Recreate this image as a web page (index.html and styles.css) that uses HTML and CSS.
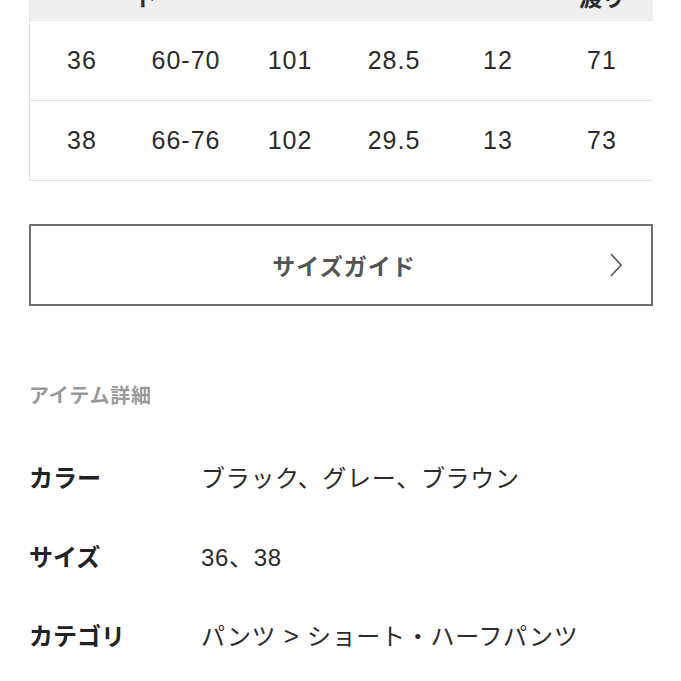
FILE: index.html
```html
<!DOCTYPE html>
<html lang="ja">
<head>
<meta charset="utf-8">
<link rel="stylesheet" href="styles.css">
</head>
<body>
<div class="page">
  <div class="table-wrap">
    <div class="size-table">
      <div class="row head">
        <div class="cell"></div>
        <div class="cell"><span class="tick">ト</span></div>
        <div class="cell"></div>
        <div class="cell"></div>
        <div class="cell"></div>
        <div class="cell">渡り</div>
      </div>
      <div class="row">
        <div class="cell">36</div><div class="cell">60-70</div><div class="cell">101</div><div class="cell">28.5</div><div class="cell">12</div><div class="cell">71</div>
      </div>
      <div class="row">
        <div class="cell">38</div><div class="cell">66-76</div><div class="cell">102</div><div class="cell">29.5</div><div class="cell">13</div><div class="cell">73</div>
      </div>
    </div>
  </div>

  <a class="guide-btn">
    <span class="guide-label">サイズガイド</span>
    <svg class="chev" width="14" height="24" viewBox="0 0 14 24"><path d="M2 1 L12 12 L2 23" fill="none" stroke="#555" stroke-width="1.6"/></svg>
  </a>

  <h2 class="section-title">アイテム詳細</h2>

  <dl class="details">
    <div class="detail"><dt>カラー</dt><dd>ブラック、グレー、ブラウン</dd></div>
    <div class="detail"><dt>サイズ</dt><dd>36、38</dd></div>
    <div class="detail"><dt>カテゴリ</dt><dd>パンツ <span class="gt">&gt;</span> ショート・ハーフパンツ</dd></div>
  </dl>
</div>
</body>
</html>
```

FILE: styles.css
```css
html, body {
  margin: 0;
  padding: 0;
  background: #fff;
}
* {
  box-sizing: border-box;
}
body {
  font-family: "Liberation Sans", "Noto Sans CJK JP", sans-serif;
  color: #2b2b2b;
}
.page {
  padding: 0 28px 0 29px;
}
.table-wrap {
  width: 624px;
  overflow: hidden;
  margin-top: -39px;
  border-left: 1px solid #e4e4e4;
}
.size-table {
  width: 728px;
}
.row {
  display: grid;
  grid-template-columns: repeat(6, 104px);
  height: 80px;
  border-bottom: 1px solid #e4e4e4;
  align-items: center;
}
.row.head {
  height: 60px;
  background: #efefef;
  border-bottom: 1px solid #e8e8e8;
  align-items: end;
  width: 624px;
}
.head .cell {
  font-family: "Noto Sans CJK JP", sans-serif;
  font-weight: 700;
  font-size: 23px;
  line-height: 1;
  padding-bottom: 12px;
  letter-spacing: 0;
}
.cell {
  text-align: center;
  font-size: 25px;
  letter-spacing: 1px;
  color: #2b2b2b;
}
.tick {
  display: inline-block;
  margin-right: 90px;
}
.guide-btn {
  display: flex;
  align-items: center;
  justify-content: center;
  position: relative;
  margin-top: 43px;
  width: 624px;
  height: 82px;
  border: 2px solid #6e6e6e;
}
.guide-label {
  font-family: "Noto Sans CJK JP", sans-serif;
  font-size: 23px;
  font-weight: 700;
  color: #555;
  letter-spacing: 1px;
  margin-left: 6px;
}
.chev {
  position: absolute;
  right: 28px;
  top: 27px;
}
.section-title {
  margin: 76px 0 0;
  font-family: "Noto Sans CJK JP", sans-serif;
  font-size: 20px;
  font-weight: 700;
  color: #9a9a9a;
  line-height: 26px;
  letter-spacing: 0.8px;
}
.details {
  margin: 29px 0 0;
  padding: 0;
}
.detail {
  display: flex;
  align-items: center;
  height: 79px;
}
.detail dt {
  width: 172px;
  font-family: "Noto Sans CJK JP", sans-serif;
  font-size: 24px;
  font-weight: 700;
  color: #222;
}
.detail dd {
  margin: 0;
  font-size: 24px;
  letter-spacing: 0.7px;
  color: #2b2b2b;
}
.gt {
  font-size: 26px;
}
```
